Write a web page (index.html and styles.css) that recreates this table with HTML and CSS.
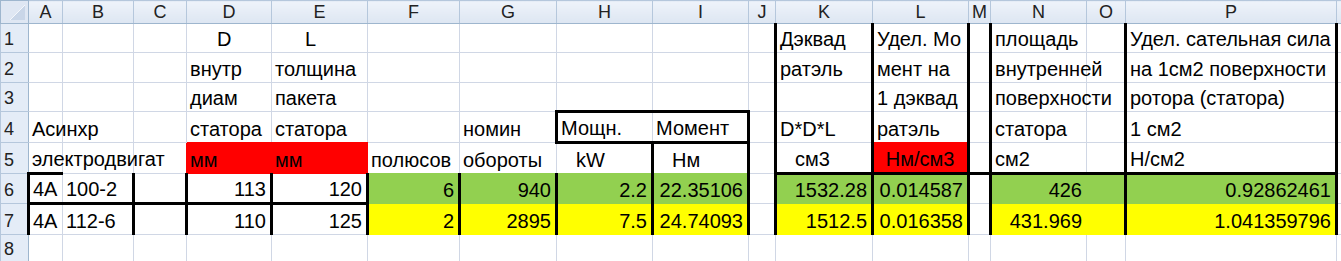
FILE: index.html
```html
<!DOCTYPE html>
<html lang="ru">
<head>
<meta charset="utf-8">
<title>Лист</title>
<link rel="stylesheet" href="styles.css">
</head>
<body>
<table class="sheet">
  <colgroup>
    <col class="w-rh"><col class="w-a"><col class="w-b"><col class="w-c"><col class="w-d"><col class="w-e"><col class="w-f"><col class="w-g"><col class="w-h"><col class="w-i"><col class="w-j"><col class="w-k"><col class="w-l"><col class="w-m"><col class="w-n"><col class="w-o"><col class="w-p"><col class="w-q">
  </colgroup>
  <tr class="h-head">
    <td class="corner"><svg class="corner-tri" width="28" height="22" viewBox="0 0 28 22"><polygon points="24,4 24,19 9,19" fill="#c9d6e8"/><line x1="24" y1="4" x2="9" y2="19" stroke="#f4f7fb" stroke-width="1"/></svg></td>
    <td class="ch">A</td><td class="ch">B</td><td class="ch">C</td><td class="ch">D</td><td class="ch">E</td><td class="ch">F</td><td class="ch">G</td><td class="ch">H</td><td class="ch">I</td><td class="ch">J</td><td class="ch">K</td><td class="ch">L</td><td class="ch">M</td><td class="ch">N</td><td class="ch">O</td><td class="ch">P</td><td class="ch"></td>
  </tr>
  <tr class="h-r1">
    <td class="rh">1</td>
    <td></td><td></td><td></td>
    <td class="pad-d1">D</td><td class="pad-e1">L</td>
    <td></td><td></td><td></td><td></td><td></td>
    <td class="tl tr">Дэквад</td><td class="tr">Удел. Мо</td><td></td>
    <td class="tl">площадь</td><td class="tr"></td><td class="tr">Удел. сательная сила</td><td></td>
  </tr>
  <tr class="h-r2">
    <td class="rh">2</td>
    <td></td><td></td><td></td>
    <td>внутр</td><td>толщина</td>
    <td></td><td></td><td></td><td></td><td></td>
    <td class="tl tr">ратэль</td><td class="tr">мент на</td><td></td>
    <td class="tl">внутренней</td><td class="tr"></td><td class="tr">на 1см2 поверхности</td><td></td>
  </tr>
  <tr class="h-r3">
    <td class="rh">3</td>
    <td></td><td></td><td></td>
    <td>диам</td><td>пакета</td>
    <td></td><td></td><td></td><td></td><td></td>
    <td class="tl tr"></td><td class="tr">1 дэквад</td><td></td>
    <td class="tl">поверхности</td><td class="tr"></td><td class="tr">ротора (статора)</td><td></td>
  </tr>
  <tr class="h-r4">
    <td class="rh">4</td>
    <td>Асинхр</td><td></td><td></td>
    <td class="under-red">статора</td><td class="under-red">статора</td>
    <td></td><td>номин</td>
    <td class="tl tt tb">Мощн.</td><td class="tt tb tr">Момент</td><td></td>
    <td class="tl tr">D*D*L</td><td class="tr under-red">ратэль</td><td></td>
    <td class="tl">статора</td><td class="tr"></td><td class="tr">1 см2</td><td></td>
  </tr>
  <tr class="h-r5">
    <td class="rh">5</td>
    <td>электродвигат</td><td></td><td class="beside-red"></td>
    <td class="red">мм</td><td class="red">мм</td>
    <td class="under-green">полюсов</td><td class="under-green">обороты</td>
    <td class="tr under-green pad-kw">kW</td><td class="tr under-green pad-nm">Нм</td><td></td>
    <td class="tl tr tb pad-cm3">см3</td><td class="tr tb red center">Нм/см3</td><td class="tb"></td>
    <td class="tl tb">см2</td><td class="tr tb"></td><td class="tr tb">Н/см2</td><td></td>
  </tr>
  <tr class="h-r6">
    <td class="rh">6</td>
    <td class="tl tt tb">4A</td><td class="tr tb">100-2</td><td class="tr tb"></td>
    <td class="num tr tb">113</td><td class="num tr tb">120</td>
    <td class="num green tr">6</td><td class="num green tr">940</td><td class="num green tr">2.2</td><td class="num green tr">22.35106</td><td></td>
    <td class="num green tl tr">1532.28</td><td class="num green tr">0.014587</td><td></td>
    <td class="num green tl">426</td><td class="green tr"></td><td class="num green tr">0.92862461</td><td></td>
  </tr>
  <tr class="h-r7">
    <td class="rh">7</td>
    <td class="tl">4A</td><td class="tr">112-6</td><td class="tr"></td>
    <td class="num tr">110</td><td class="num tr">125</td>
    <td class="num yellow tr">2</td><td class="num yellow tr">2895</td><td class="num yellow tr">7.5</td><td class="num yellow tr">24.74093</td><td></td>
    <td class="num yellow tl tr">1512.5</td><td class="num yellow tr">0.016358</td><td></td>
    <td class="num yellow tl">431.969</td><td class="yellow tr"></td><td class="num yellow tr">1.041359796</td><td></td>
  </tr>
  <tr class="h-r8">
    <td class="rh">8</td>
    <td></td><td></td><td></td><td></td><td></td><td></td><td></td><td></td><td></td><td></td><td></td><td></td><td></td><td></td><td></td><td></td><td></td>
  </tr>
</table>
</body>
</html>
```

FILE: styles.css
```css
html, body {
  margin: 0;
  padding: 0;
  background: #ffffff;
}

.sheet {
  border-collapse: collapse;
  table-layout: fixed;
  width: 1341px;
  font-family: "Liberation Sans", Arial, sans-serif;
  font-size: 20px;
  color: #000000;
}

.w-rh { width: 28px; }
.w-a { width: 34px; }
.w-b { width: 71px; }
.w-c { width: 53px; }
.w-d { width: 85px; }
.w-e { width: 96px; }
.w-f { width: 92px; }
.w-g { width: 97px; }
.w-h { width: 96px; }
.w-i { width: 96px; }
.w-j { width: 27px; }
.w-k { width: 97px; }
.w-l { width: 96px; }
.w-m { width: 22px; }
.w-n { width: 96px; }
.w-o { width: 39px; }
.w-p { width: 211px; }
.w-q { width: 5px; }

.h-head { height: 22px; }
.h-r1 { height: 29px; }
.h-r2 { height: 30px; }
.h-r3 { height: 29px; }
.h-r4 { height: 31px; }
.h-r5 { height: 31px; }
.h-r6 { height: 30px; }
.h-r7 { height: 31px; }
.h-r8 { height: 28px; }

.sheet td {
  border: 1px solid #d0d7e5;
  padding: 0 4px 3px 3px;
  line-height: 20px;
  vertical-align: bottom;
  white-space: nowrap;
  overflow: visible;
  text-align: left;
}

/* headers */
.sheet td.corner {
  padding: 0;
  background: #dfe7f3;
  border-color: #9eb6ce;
  vertical-align: top;
  line-height: 0;
}
.corner-tri { display: block; }

.sheet td.ch {
  padding: 0;
  text-align: center;
  vertical-align: middle;
  font-size: 18px;
  line-height: 20px;
  color: #222222;
  background: linear-gradient(#eef3fa, #dde6f2);
  border-color: #b5c7dc;
  border-bottom-color: #9eb6ce;
}

.sheet td.rh {
  padding: 0 0 3px 3px;
  font-size: 18px;
  color: #222222;
  background: #e4ecf7;
  border-color: #b5c7dc;
  border-right-color: #9eb6ce;
}

/* alignment */
.sheet td.num { text-align: right; }
.sheet td.center { text-align: center; }
.sheet td.pad-d1 { padding-left: 30px; }
.sheet td.pad-e1 { padding-left: 33px; }
.sheet td.pad-kw { padding-left: 19px; }
.sheet td.pad-nm { padding-left: 18px; }
.sheet td.pad-cm3 { padding-left: 18px; }

/* fills */
.sheet td.red { background: #ff0000; border-color: #ff0000; }
.sheet td.green { background: #92d050; border-color: #92d050; }
.sheet td.yellow { background: #ffff00; border-color: #ffff00; }
.sheet td.under-red { border-bottom-color: #ff0000; }
.sheet td.beside-red { border-right-color: #ff0000; }
.sheet td.under-green { border-bottom-color: #92d050; }

/* thick borders */
.sheet td.tl { border-left: 3px solid #000000; }
.sheet td.tr { border-right: 3px solid #000000; }
.sheet td.tt { border-top: 3px solid #000000; }
.sheet td.tb { border-bottom: 3px solid #000000; }
```
